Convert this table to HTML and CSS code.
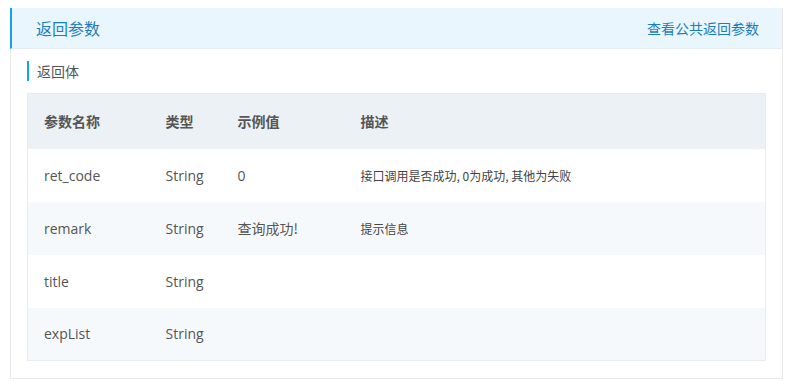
FILE: index.html
```html
<!DOCTYPE html>
<html lang="zh-CN">
<head>
<meta charset="utf-8">
<title>返回参数</title>
<link rel="stylesheet" href="styles.css">
</head>
<body>
<section class="card">
  <header class="card-head">
    <h2 class="card-title">返回参数</h2>
    <a class="card-link" href="#">查看公共返回参数</a>
  </header>
  <div class="card-body">
    <h3 class="sub-title">返回体</h3>
    <table class="params">
      <thead>
        <tr><th class="c1">参数名称</th><th class="c2">类型</th><th class="c3">示例值</th><th class="c4">描述</th></tr>
      </thead>
      <tbody>
        <tr><td>ret_code</td><td>String</td><td>0</td><td class="desc">接口调用是否成功, 0为成功, 其他为失败</td></tr>
        <tr><td>remark</td><td>String</td><td class="cn">查询成功!</td><td class="desc">提示信息</td></tr>
        <tr><td>title</td><td>String</td><td></td><td class="desc"></td></tr>
        <tr><td>expList</td><td>String</td><td></td><td class="desc"></td></tr>
      </tbody>
    </table>
  </div>
</section>
</body>
</html>
```
FILE: styles.css
```css
* { box-sizing: border-box; }
body {
  margin: 0;
  background: #fff;
  font-family: "Open Sans", "Noto Sans CJK SC", sans-serif;
  color: #555;
}
.card {
  margin: 8px 11px 0 10px;
  width: 773px;
  border: 1px solid #e8e8e8;
  border-top: none;
  border-left: none;
}
.card-head {
  height: 41px;
  background: #eaf6fd;
  border-left: 2px solid #15a3ee;
  border-bottom: 1px solid #e6ecf0;
  display: flex;
  align-items: center;
  justify-content: space-between;
  padding: 0 23px 0 24px;
}
.card-title {
  margin: 0;
  font-family: "Noto Sans CJK SC", sans-serif;
  font-size: 16px;
  font-weight: normal;
  color: #1b7dc0;
}
.card-link {
  font-family: "Noto Sans CJK SC", sans-serif;
  font-size: 14px;
  color: #1b7dc0;
  text-decoration: none;
}
.card-body {
  border-left: 1px solid #e8e8e8;
  padding: 12px 16px 17px 16px;
}
.sub-title {
  margin: 0 0 12px 0;
  height: 20px;
  line-height: 20px;
  border-left: 2px solid #15a3ee;
  padding-left: 8px;
  font-family: "Noto Sans CJK SC", sans-serif;
  font-size: 14px;
  font-weight: normal;
  color: #555;
}
.params {
  width: 739px;
  border-collapse: collapse;
  border: 1px solid #e8ecf0;
  font-size: 14px;
}
.params th {
  height: 55px;
  background: #ecf1f5;
  text-align: left;
  font-family: "Noto Sans CJK SC", sans-serif;
  font-size: 14px;
  font-weight: bold;
  color: #555;
  padding: 0 0 0 16px;
}
.params .c1 { width: 122px; }
.params .c2 { width: 72px; }
.params .c3 { width: 123px; }
.params td {
  height: 53px;
  padding: 0 0 0 16px;
  color: #555;
}
.params tbody tr:nth-child(even) td { background: #f6f9fc; }
.params td.cn {
  font-family: "Noto Sans CJK SC", sans-serif;
  font-size: 14px;
}
.params td.desc {
  font-family: "Noto Sans CJK SC", sans-serif;
  font-size: 12px;
  color: #444;
}
```
